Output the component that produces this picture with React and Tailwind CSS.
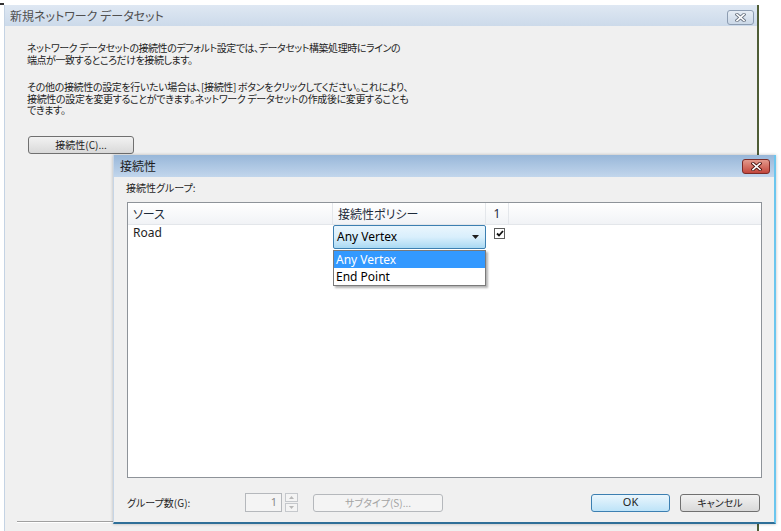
import React from "react";

const jp = "font-['Noto_Sans_CJK_JP',sans-serif] [font-feature-settings:'palt']";
const latin = "font-['Noto_Sans','Noto_Sans_CJK_JP',sans-serif]";

const CloseGlyph = ({ light }) => (
  <svg width="11" height="9" viewBox="0 0 11 9">
    <path
      d="M2 1.5 L9 7.5 M9 1.5 L2 7.5"
      stroke={light ? "#6d7785" : "#4a1410"}
      strokeWidth="3.4"
      strokeLinecap="square"
    />
    <path
      d="M2 1.5 L9 7.5 M9 1.5 L2 7.5"
      stroke="#ffffff"
      strokeWidth="1.6"
      strokeLinecap="square"
    />
  </svg>
);

const WinButton = ({ children, className = "", primary, disabled }) => (
  <div
    className={
      "flex h-[18px] items-center justify-center rounded-[3px] border text-[10px] " +
      (disabled
        ? "border-[#b5b8bc] bg-[#f4f4f4] text-[#a3a3a3] "
        : primary
        ? "border-[#3c7fb1] bg-gradient-to-b from-[#eaf6fd] to-[#bde3f8] text-[#1e1e1e] "
        : "border-[#707070] bg-gradient-to-b from-[#f2f2f2] to-[#d9d9d9] text-[#1e1e1e] ") +
      className
    }
  >
    {children}
  </div>
);

export default function App() {
  return (
    <div className={"relative h-[531px] w-[781px] overflow-hidden bg-white " + jp}>
      {/* corner mark of the outer window */}
      <div className="absolute left-0 top-[3px] h-[2px] w-[4px] bg-[#333]" />

      {/* Outer window: 新規ネットワーク データセット */}
      <div className="absolute left-[4px] top-[5px] flex h-[526px] w-[755px] flex-col border-l border-[#c4d3e4] border-r-2 border-r-[#4f5d36] bg-[#f0f0f0]">
        <div className="flex h-[21px] shrink-0 items-center justify-between bg-gradient-to-b from-[#dfe8f3] to-[#ccdaea] pl-[5px] pr-[3px]">
          <span className="text-[12px] text-[#505050]">新規ネットワーク データセット</span>
          <div className="mt-[3px] flex h-[15px] w-[27px] items-center justify-center rounded-[3px] border border-[#8d9db2] bg-gradient-to-b from-[#e6edf5] to-[#cbd8e7]">
            <CloseGlyph light />
          </div>
        </div>

        <div className="flex flex-1 flex-col pl-[22px] pt-[16px] text-[10px] leading-[11.5px] tracking-[-0.45px] text-[#1e1e1e]">
          <p className="whitespace-nowrap">
            ネットワーク データセットの接続性のデフォルト設定では、データセット構築処理時にラインの
            <br />
            端点が一致するところだけを接続します。
          </p>
          <p className="mt-[16px] whitespace-nowrap tracking-[-0.35px]">
            その他の接続性の設定を行いたい場合は、[接続性] ボタンをクリックしてください。これにより、
            <br />
            接続性の設定を変更することができます。ネットワーク データセットの作成後に変更することも
            <br />
            できます。
          </p>
          <WinButton className="mt-[20px] w-[106px] ml-[1px] tracking-normal">接続性(C)...</WinButton>

          <div className="mt-auto mb-[8px] ml-[-10px] mr-[12px] h-[2px] border-t border-[#a0a0a0] border-b border-b-white" />
        </div>
      </div>

      {/* Inner window: 接続性 */}
      <div className="absolute left-[113px] top-[155px] flex h-[369px] w-[663px] flex-col border-l border-[#c6d5e6] border-r-2 border-r-[#6cc6ee] border-b-2 border-b-[#2f6f98] bg-[#f0f0f0] shadow-[0_0_3px_rgba(0,0,0,0.25)]">
        <div className="flex h-[22px] shrink-0 items-center justify-between bg-gradient-to-b from-[#98b7d9] to-[#c2d6ec] pl-[6px] pr-[4px]">
          <span className="text-[12px] text-[#1e1e1e]">接続性</span>
          <div className="flex h-[15px] w-[28px] items-center justify-center rounded-[3px] border border-[#7c2b27] bg-gradient-to-b from-[#e3998c] to-[#c2453c]">
            <CloseGlyph />
          </div>
        </div>

        <div className="flex flex-1 flex-col pl-[12px] pr-[12px] pt-[5px] text-[10px] text-[#1e1e1e]">
          <div className="leading-[11px]">接続性グループ:</div>

          {/* Grid */}
          <div className="ml-[1px] mt-[9px] h-[276px] border border-[#8e9399] bg-white">
            <div className="flex h-[22px] border-b border-[#e3e6ea] bg-gradient-to-b from-white to-[#f1f3f6] text-[12px] text-[#1d2a3a]">
              <div className="flex w-[205px] items-center border-r border-[#e4e7eb] pl-[5px]">ソース</div>
              <div className="flex w-[153px] items-center border-r border-[#e4e7eb] pl-[5px]">接続性ポリシー</div>
              <div className={"flex w-[23px] items-center justify-center border-r border-[#e4e7eb] " + latin}>1</div>
              <div className="flex-1" />
            </div>

            <div className="flex h-[25px]">
              <div className={"w-[205px] pl-[5px] pt-[1px] text-[12px] leading-[14px] " + latin}>Road</div>
              <div className="relative w-[153px]">
                {/* combobox */}
                <div className={"flex h-[24px] items-center justify-between rounded-[2px] border border-[#3c7fb1] bg-gradient-to-b from-[#eaf6fd] via-[#d9effc] to-[#a9d9f3] pl-[3px] pr-[6px] text-[12px] text-black " + latin}>
                  <span>Any Vertex</span>
                  <svg width="7" height="4" viewBox="0 0 7 4">
                    <path d="M0 0 H7 L3.5 4 Z" fill="#1e1e1e" />
                  </svg>
                </div>
                {/* dropdown list */}
                <div className={"absolute left-0 top-[25px] z-10 w-[153px] border border-[#7a7a7a] bg-white text-[12px] shadow-[2px_2px_2px_rgba(0,0,0,0.3)] " + latin}>
                  <div className="flex h-[17px] items-center bg-[#3399ff] pl-[2px] text-white">Any Vertex</div>
                  <div className="flex h-[17px] items-center pl-[2px] text-black">End Point</div>
                </div>
              </div>
              <div className="w-[23px] pl-[8px] pt-[3px]">
                <div className="flex h-[11px] w-[11px] items-center justify-center border border-[#5c5c5c] bg-white">
                  <svg width="8" height="7" viewBox="0 0 8 7">
                    <path d="M1 3.5 L3 5.5 L7 1" stroke="#111" strokeWidth="1.8" fill="none" />
                  </svg>
                </div>
              </div>
            </div>
          </div>

          {/* Bottom row */}
          <div className="mt-[15px] flex items-center pr-[2px]">
            <div className="w-[119px] pl-[1px]">グループ数(G):</div>
            <div className={"flex h-[19px] w-[37px] items-center justify-end border border-[#b5b8bc] bg-[#f4f4f4] pr-[4px] text-[11px] text-[#8a8a8a] " + latin}>
              1
            </div>
            <div className="ml-[3px] flex h-[19px] w-[13px] flex-col gap-[1px]">
              <div className="flex flex-1 items-center justify-center border border-[#c5c8cc] bg-[#f4f4f4]">
                <svg width="5" height="3" viewBox="0 0 5 3"><path d="M0 3 L2.5 0 L5 3 Z" fill="#b8b8b8" /></svg>
              </div>
              <div className="flex flex-1 items-center justify-center border border-[#c5c8cc] bg-[#f4f4f4]">
                <svg width="5" height="3" viewBox="0 0 5 3"><path d="M0 0 L2.5 3 L5 0 Z" fill="#b8b8b8" /></svg>
              </div>
            </div>
            <WinButton disabled className="ml-[15px] w-[130px]">サブタイプ(S)...</WinButton>
            <div className="flex-1" />
            <WinButton primary className={"w-[79px] text-[11px] " + latin}>OK</WinButton>
            <WinButton className="ml-[10px] w-[80px]">キャンセル</WinButton>
          </div>
        </div>
      </div>
    </div>
  );
}
